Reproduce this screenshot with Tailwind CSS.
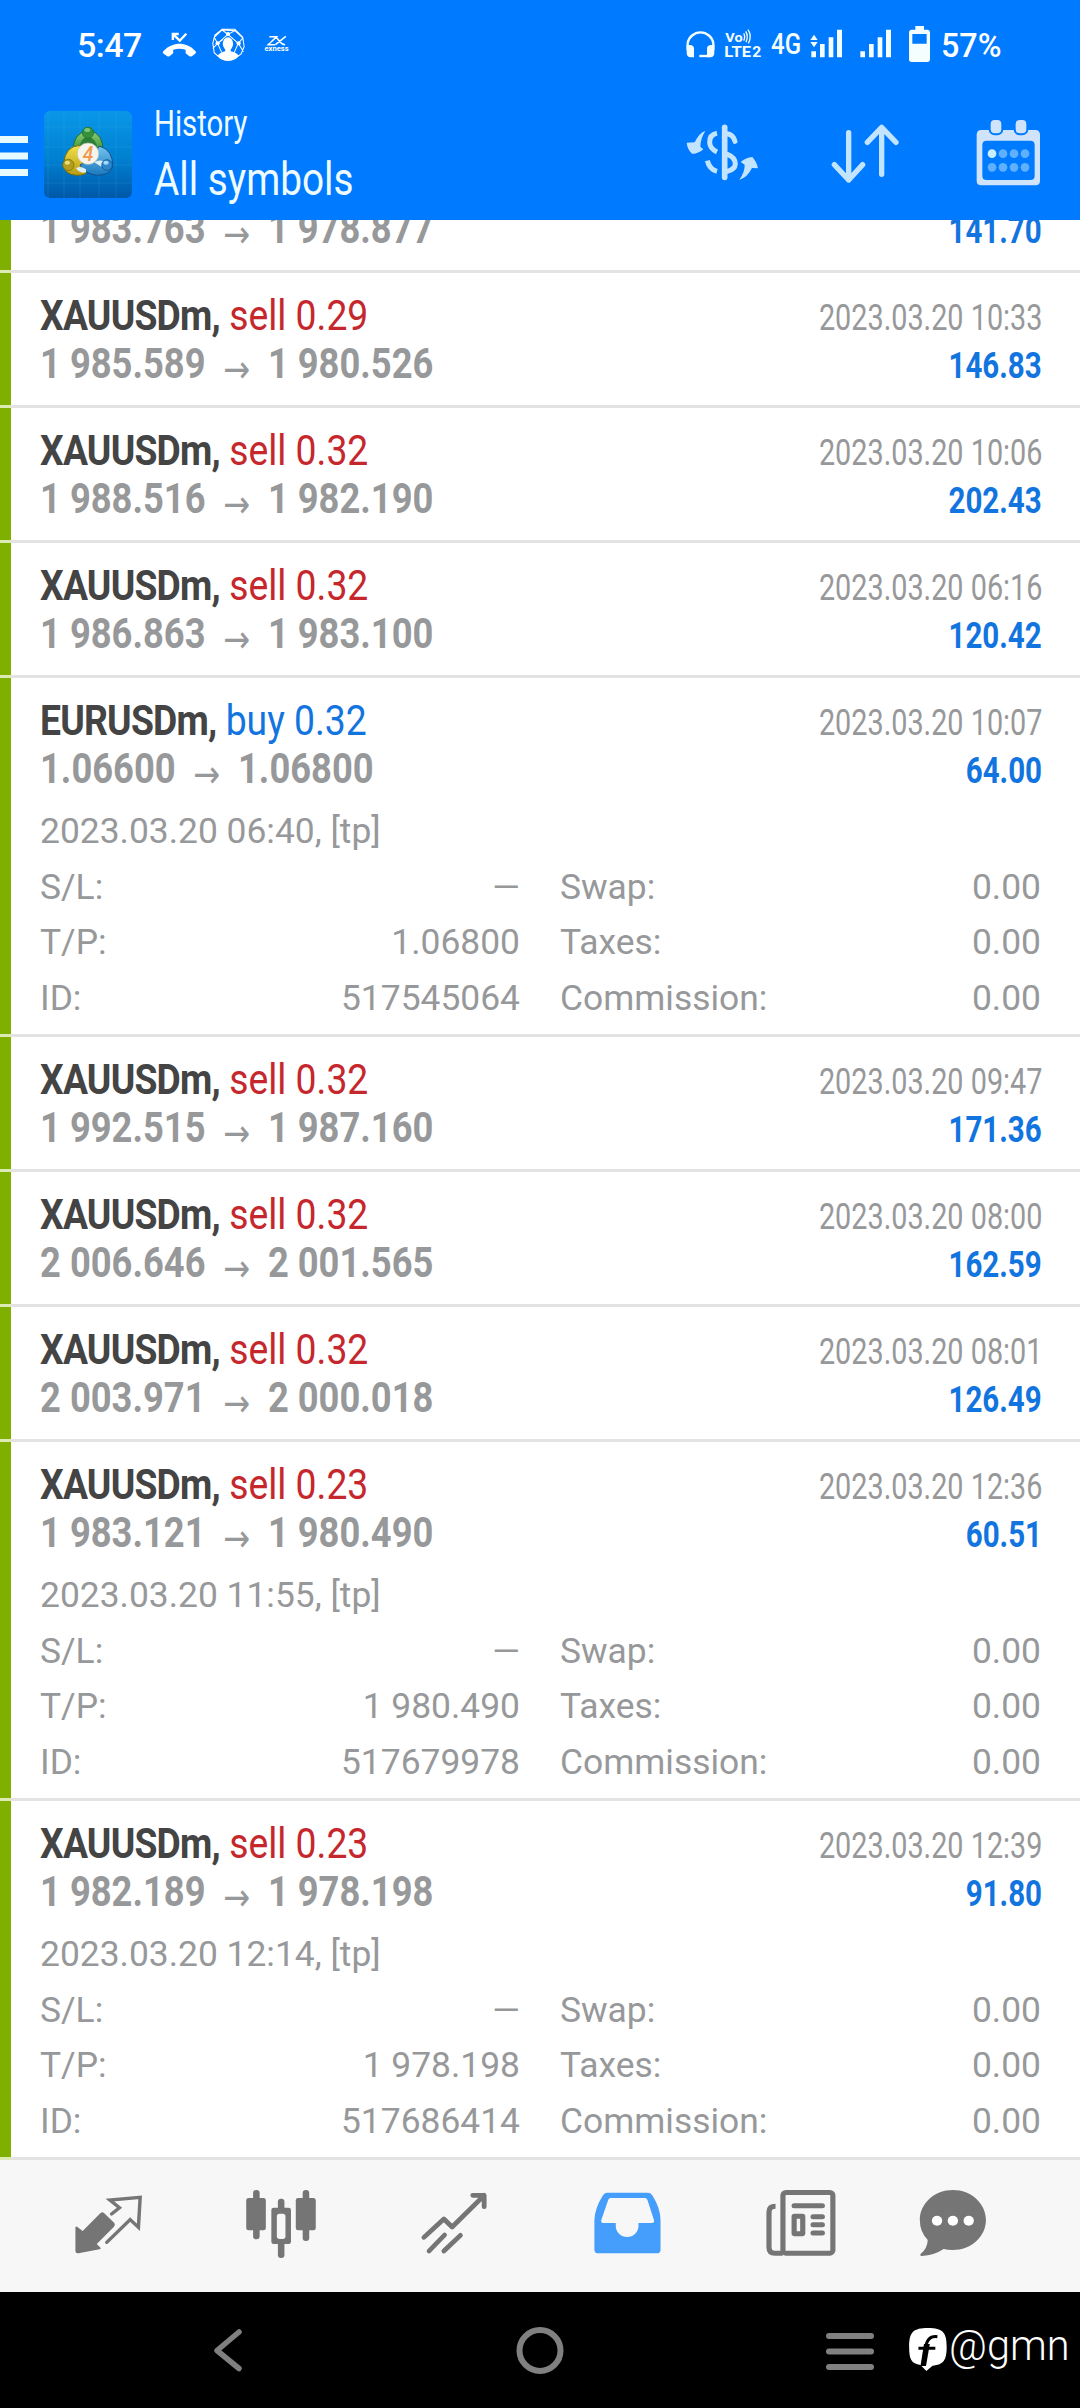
<!DOCTYPE html>
<html lang="en">
<head>
<meta charset="utf-8">
<title>History</title>
<script src="https://cdn.jsdelivr.net/npm/@tailwindcss/browser@4"></script>
</head>
<body class="w-[1080px] h-[2408px] overflow-hidden bg-white font-['Roboto',sans-serif] flex flex-col">
<header class="h-[220px] shrink-0 bg-[#007aff] text-[#effcff] flex flex-col relative z-10">
  <div class="h-[80px] flex items-start whitespace-nowrap">
    <div class="w-[77px]"></div>
    <div class="w-[77px] text-[34px] leading-[80px] h-[80px] pt-[5px] font-medium tracking-[-0.5px] text-white">5:47</div>
    <svg class="w-[146px] h-[80px] shrink-0" viewBox="154 0 146 80">
      <g transform="scale(.34435 .33333)" fill="#fff">
        <path d="M473 155C490 134 512 131 521 131C531 131 553 134 569 155Q570 159 566 162L557 169Q553 171 549 168L539 160V149Q521 144 503 149V160L493 168Q489 171 485 168L475 161Q472 158 473 155Z"/>
        <path d="M502 120V102H519M503 103L522 122L541 101" fill="none" stroke="#fff" stroke-width="7"/>
        <g fill="none" stroke="#fff" stroke-width="3">
          <path d="M645 88H682L705 112L709 140L700 162L682 176H642L622 158L618 130L624 105ZM645 90L682 92L662 103L645 90L622 112L632 130L618 145M682 92L705 114L692 130L707 155M632 130L662 103L692 130M632 130L648 118M632 130L644 158M692 130L680 158"/>
        </g>
        <circle cx="662" cy="102" r="6"/><circle cx="632" cy="130" r="6"/><circle cx="693" cy="130" r="6"/>
        <ellipse cx="662" cy="131" rx="15" ry="19"/>
        <path d="M654 145H670V154Q688 158 693 168Q680 183 662 183Q645 183 632 168Q638 158 654 154Z"/>
        <path d="M782 110H803L779 134H799M799 110C806 110 812 134 828 134M830 109L800 134" fill="none" stroke="#fff" stroke-width="4.5"/>
        <text x="768" y="154" font-size="19" font-weight="700" textLength="70" lengthAdjust="spacingAndGlyphs" font-family="Roboto">exness</text>
      </g>
    </svg>
    <div class="w-[384px]"></div>
    <svg class="w-[257px] h-[80px] shrink-0" viewBox="684 0 257 80">
      <g transform="translate(640 0) scale(.33333)" fill="#f4feff">
        <path d="M143 150V130A39 39 0 0 1 220 130V150" fill="none" stroke="#f4feff" stroke-width="7"/>
        <path d="M140 135H152Q162 137 162 145V172H152Q140 171 140 158ZM223 135H211Q201 137 201 145V172H211Q223 171 223 158Z"/>
        <path d="M178 168H212" stroke="#f4feff" stroke-width="7"/>
        <text x="256" y="127" font-size="41" font-weight="700" textLength="52" lengthAdjust="spacingAndGlyphs" font-family="Roboto">Vo</text>
        <path d="M311 100Q317 110 311 122M317 94Q326 108 318 127M324 89Q337 108 325 130" fill="none" stroke="#f4feff" stroke-width="4"/>
        <text x="253" y="172" font-size="46" font-weight="700" textLength="80" lengthAdjust="spacingAndGlyphs" font-family="Roboto">LTE</text>
        <text x="337" y="172" font-size="44" font-weight="700" textLength="27" lengthAdjust="spacingAndGlyphs" font-family="Roboto">2</text>
        <text x="393" y="162" font-size="87" textLength="90" lengthAdjust="spacingAndGlyphs" font-family="Roboto" font-weight="500">4G</text>
        <path d="M511 120L522 104L533 120ZM511 126L522 142L533 126ZM514 154h14v18h-14zM540 132h14v40h-14zM566 112h14v60h-14zM591 89h15v83h-15z"/>
        <path d="M661 154h14v18h-14zM687 132h14v40h-14zM713 112h14v60h-14zM738 89h15v83h-15z"/>
        <path fill-rule="evenodd" d="M826 78H852V89H863Q870 90 870 97V178Q870 186 862 186H815Q807 186 807 178V97Q807 90 814 89H826ZM817 102V131H860V102Z"/>
      </g>
    </svg>
    <div class="text-[34px] leading-[80px] pt-[5px] font-medium text-white origin-left scale-x-[0.95] w-[66px]">57%</div>
  </div>
  <div class="h-[140px] flex whitespace-nowrap">
    <svg class="w-[154px] h-[140px] shrink-0" viewBox="0 80 154 140">
      <defs>
        <linearGradient id="bg" x1="0" y1="0" x2="0" y2="1"><stop offset="0" stop-color="#0a97e9"/><stop offset=".55" stop-color="#0080d0"/><stop offset="1" stop-color="#0058a8"/></linearGradient>
        <linearGradient id="gr" x1="0" y1="0" x2="0" y2="1"><stop offset="0" stop-color="#8fd07a"/><stop offset="1" stop-color="#2f8a2c"/></linearGradient>
        <linearGradient id="ye" x1="0" y1="0" x2="0" y2="1"><stop offset="0" stop-color="#f1e24a"/><stop offset="1" stop-color="#b89a10"/></linearGradient>
        <linearGradient id="bl" x1="0" y1="0" x2="0" y2="1"><stop offset="0" stop-color="#74c4ee"/><stop offset="1" stop-color="#1b78bf"/></linearGradient>
      </defs>
      <path fill="#e6faff" d="M0 136h28v7H0zM0 152.500h28v7H0zM0 169h28v7H0z"/>
      <rect x="44" y="111" width="88" height="87" rx="6" fill="url(#bg)"/>
      <path d="M48 111V198M64 111V198M80 111V198M99 111V198M116 111V198M44 127H132M44 147H132M44 165H132M44 183H132" stroke="#4db8f5" stroke-opacity=".16"/>
      <g transform="translate(30 100) scale(.33333)">
        <path d="M130 160Q125 98 175 92Q224 98 218 160Z" fill="url(#gr)" stroke="#1f6b2f" stroke-width="3"/>
        <path d="M148 150Q150 112 175 112Q200 114 203 152Z" fill="#2d7f35"/>
        <path d="M150 136Q106 138 101 190Q100 224 140 226Q168 226 174 212L160 180Z" fill="url(#ye)" stroke="#6d6a14" stroke-width="3"/>
        <path d="M208 138Q250 150 248 200Q240 226 200 226Q165 222 150 195L180 180Z" fill="url(#bl)" stroke="#0e4f8c" stroke-width="3"/>
        <path d="M138 205Q150 196 168 208V217Q150 222 138 205ZM193 187Q210 177 222 186L214 200Z" fill="#d9eef5"/>
        <circle cx="174" cy="98" r="17" fill="#35903a" stroke="#206c2a" stroke-width="2"/><ellipse cx="172" cy="90" rx="9" ry="6" fill="#7cc478"/>
        <circle cx="115" cy="195" r="17" fill="#b39c1e" stroke="#6d6a14" stroke-width="2"/><ellipse cx="112" cy="188" rx="8" ry="6" fill="#e9df7c"/>
        <circle cx="231" cy="195" r="16" fill="#2b86cc" stroke="#0e4f8c" stroke-width="2"/><ellipse cx="228" cy="188" rx="8" ry="6" fill="#a7daf5"/>
        <circle cx="174" cy="161" r="32" fill="#f7f4ee" stroke="#b9c4b0" stroke-width="2"/>
        <text x="158" y="182" font-size="58" font-weight="500" font-style="italic" fill="#ef9a4e" font-family="Roboto">4</text>
      </g>
    </svg>
    <div class="w-[532px] pt-[19px]">
      <div class="text-[36px] leading-[50px] origin-left scale-x-[0.815]">History</div>
      <div class="text-[47px] leading-[60px] origin-left scale-x-[0.825]">All symbols</div>
    </div>
    <svg class="w-[394px] h-[140px] shrink-0" viewBox="686 80 394 140">
      <g transform="translate(640 0) scale(.33333)" fill="none" stroke="#c3e4ff" stroke-linecap="round" stroke-linejoin="round">
        <path d="M254 382V532" stroke-width="17"/>
        <path d="M231 400Q208 404 209 428Q210 446 231 456M202 482Q208 508 231 514" stroke-width="15" stroke-linecap="butt"/>
        <path d="M262 401Q280 404 285 424M262 463Q286 472 286 492Q285 508 262 514" stroke-width="15"/>
        <path d="M196 393Q178 398 164 427L140 428Q142 448 156 461Q172 463 190 448L181 440Q182 415 196 393ZM298 539Q322 533 336 504L354 505Q350 485 337 471Q318 472 302 486L314 494Q315 515 298 539Z" fill="#c3e4ff" stroke="none"/>
        <path d="M626 398V540M583 494L626 540L668 494M725 523V382M682 427L725 382L768 427" stroke-width="16"/>
        <path fill="#cfe3fb" stroke="none" fill-rule="evenodd" d="M1024 390H1186Q1200 390 1200 404V542Q1200 556 1186 556H1024Q1010 556 1010 542V404Q1010 390 1024 390ZM1040 422Q1027 422 1027 435V527Q1027 540 1040 540H1171Q1184 540 1184 527V435Q1184 422 1171 422Z"/>
        <rect x="1049" y="357" width="38" height="46" rx="15" fill="#cfe3fb" stroke="#007aff" stroke-width="6"/>
        <rect x="1124" y="357" width="38" height="46" rx="15" fill="#cfe3fb" stroke="#007aff" stroke-width="6"/>
        <g stroke="none" fill="#5fb0ff"><circle cx="1056" cy="461" r="13" fill="#c9efff"/><circle cx="1089" cy="461" r="13"/><circle cx="1122" cy="461" r="13"/><circle cx="1155" cy="461" r="13"/><circle cx="1056" cy="502" r="13"/><circle cx="1089" cy="502" r="13"/><circle cx="1122" cy="502" r="13"/><circle cx="1155" cy="502" r="13"/></g>
      </g>
    </svg>
  </div>
</header>
<main id="list" class="h-[1940px] shrink-0 overflow-hidden flex flex-col justify-end"></main>
<nav class="h-[132px] shrink-0 bg-[#f7f7f7] flex">
  <svg class="w-[194px] h-[132px]" viewBox="0 2160 194 132"><g transform="translate(0 2140) scale(.34435 .33333)">
    <path d="M219 262Q220 258 224 260L240 273L292 219Q297 214 302 219L332 249Q336 254 331 260L281 312L292 323Q294 327 289 328L228 340Q219 340 219 332Z" fill="#757575"/>
    <path d="M324 222L347 203L319 180L407 172L402 262L378 239L310 307" fill="none" stroke="#757575" stroke-width="10" stroke-linecap="round"/></g></svg>
  <svg class="w-[173px] h-[132px]" viewBox="194 2160 173 132"><g transform="translate(0 2140) scale(.34435 .33333)" fill="#757575">
    <rect x="735" y="150" width="19" height="148" rx="9"/><rect x="715" y="174" width="57" height="97" rx="7"/>
    <rect x="879" y="150" width="19" height="153" rx="9"/><rect x="859" y="174" width="58" height="97" rx="7"/>
    <rect x="807" y="176" width="19" height="178" rx="9"/><rect x="788" y="203" width="57" height="109" rx="7"/><rect x="804" y="221" width="25" height="76" rx="8" fill="#f7f7f7"/></g></svg>
  <svg class="w-[173px] h-[132px]" viewBox="367 2160 173 132"><g transform="translate(0 2140) scale(.34435 .33333)" fill="none" stroke="#757575" stroke-width="14" stroke-linecap="round" stroke-linejoin="round">
    <path d="M1231 292L1289 237L1313 261L1406 166M1373 166H1406V200M1246 333L1291 285M1289 333L1337 286"/></g></svg>
  <svg class="w-[174px] h-[132px]" viewBox="540 2160 174 132"><g transform="translate(540 2140) scale(.34435 .33333)">
    <path fill="#459dfc" fill-rule="evenodd" d="M194 158H314Q322 158 327 167Q350 205 350 240V329Q350 340 339 340H170Q158 340 158 329V240Q159 205 182 167Q187 158 194 158ZM205 174Q200 174 198 180L178 240Q176 249 184 249H220V258A33 33 0 0 0 286 258V249H325Q333 249 331 240L312 180Q310 174 305 174Z"/></g></svg>
  <svg class="w-[166px] h-[132px]" viewBox="714 2160 166 132"><g transform="translate(540 2140) scale(.34435 .33333)" fill="none" stroke="#757575">
    <path d="M684 199Q665 199 665 216V322Q665 340 682 340H705" stroke-width="15"/><rect x="705.500" y="157.500" width="145" height="182" rx="9" stroke-width="15"/>
    <path d="M738 197H820M793 230H820M793 254H820M793 279H820" stroke-width="15" stroke-linecap="round"/><rect x="738" y="229" width="25" height="52" rx="1" stroke-width="15"/></g></svg>
  <svg class="w-[200px] h-[132px]" viewBox="880 2160 200 132"><g transform="translate(540 2140) scale(.34435 .33333)" fill="#757575">
    <path d="M1199 150C1252 150 1295 190 1295 240S1252 330 1199 330Q1184 330 1172 327Q1145 346 1109 348Q1101 346 1106 341Q1125 325 1126 300Q1103 275 1103 240C1103 190 1146 150 1199 150Z"/><g fill="#fff"><circle cx="1153" cy="242" r="15"/><circle cx="1199" cy="242" r="15"/><circle cx="1245" cy="242" r="15"/></g></g></svg>
</nav>
<footer class="h-[116px] shrink-0 bg-black flex">
  <svg class="w-[949px] h-[116px] shrink-0" viewBox="0 2292 949 116" fill="none" stroke="#808080" stroke-width="6" stroke-linecap="round" stroke-linejoin="round">
    <path d="M239 2332L217 2350.500L239 2368.500" stroke-width="5.500"/><circle cx="540" cy="2350.500" r="20.500"/>
    <path d="M829 2336H871M829 2351.500H871M829 2367H871"/>
    <g transform="translate(540 2140) scale(.34435 .33333)" stroke="none"><path fill="#fff" d="M1127 564C1170 564 1181 578 1181 620C1181 662 1172 673 1140 677L1122 693L1105 675C1078 670 1072 658 1072 620C1072 576 1084 564 1127 564Z"/><path d="M1119 630Q1122 585 1154 590M1099 625H1148" stroke="#000" stroke-width="9" fill="none" stroke-linecap="butt"/><path d="M1115 612L1105 678H1121L1132 612Z" fill="#000"/></g>
  </svg>
  <div class="text-white text-[43px] leading-[60px] pt-[23px] font-light whitespace-nowrap origin-left scale-x-[0.965]">@gmn</div>
</footer>
<script>
// The first entry is scrolled under the header, so only its price line is rendered.
const trades = [
  ["", "", "1 983.763", "1 978.877", "", "141.70"],
  ["XAUUSDm", "sell 0.29", "1 985.589", "1 980.526", "2023.03.20 10:33", "146.83"],
  ["XAUUSDm", "sell 0.32", "1 988.516", "1 982.190", "2023.03.20 10:06", "202.43"],
  ["XAUUSDm", "sell 0.32", "1 986.863", "1 983.100", "2023.03.20 06:16", "120.42"],
  ["EURUSDm", "buy 0.32", "1.06600", "1.06800", "2023.03.20 10:07", "64.00", "2023.03.20 06:40, [tp]", "517545064"],
  ["XAUUSDm", "sell 0.32", "1 992.515", "1 987.160", "2023.03.20 09:47", "171.36"],
  ["XAUUSDm", "sell 0.32", "2 006.646", "2 001.565", "2023.03.20 08:00", "162.59"],
  ["XAUUSDm", "sell 0.32", "2 003.971", "2 000.018", "2023.03.20 08:01", "126.49"],
  ["XAUUSDm", "sell 0.23", "1 983.121", "1 980.490", "2023.03.20 12:36", "60.51", "2023.03.20 11:55, [tp]", "517679978"],
  ["XAUUSDm", "sell 0.23", "1 982.189", "1 978.198", "2023.03.20 12:39", "91.80", "2023.03.20 12:14, [tp]", "517686414"],
];
const cell = (k, v) => `<div class="flex justify-between"><span>${k}</span><span>${v}</span></div>`;
document.getElementById("list").innerHTML = trades.map(([sym, side, open, close, date, pl, opened, id]) => `
  <section class="shrink-0 flex whitespace-nowrap">
    <div class="w-[11px] bg-[#7fb000] border-b-3 border-[#dcebb4]"></div>
    <div class="flex-1 pl-[29px] pr-[38px] pt-[18px] border-b-3 border-[#e3e3e3] text-[#97989a] ${opened ? "h-[359px]" : "h-[135px]"}">
      <div class="flex justify-between h-[48px] leading-[48px] items-baseline">
        ${sym && `<div class="text-[43px] origin-left scale-x-[0.867]"><b class="text-[#444444] font-bold tracking-[-0.9px]">${sym},</b> <span class="${side[0] === "b" ? "text-[#1274de]" : "text-[#c5272d]"}">${side}</span></div>
        <div class="text-[36px] origin-right scale-x-[0.8]">${date}</div>`}
      </div>
      <div class="flex justify-between h-[48px] leading-[48px] items-baseline">
        <div class="text-[43px] font-bold origin-left scale-x-[0.845]">${open}<span class="font-['DejaVu_Sans'] font-normal text-[38px] leading-[20px] mx-[21px] align-[-4px]">→</span>${close}</div>
        <div class="text-[36px] font-bold text-[#1274de] origin-right scale-x-[0.82]">${pl}</div>
      </div>
      ${opened ? `<div class="mt-[12px] text-[35.4px] leading-[55.6px]">
        <div>${opened}</div>
        <div class="grid grid-cols-[480px_481px] gap-x-[40px]">
          ${cell("S/L:", "—")}${cell("Swap:", "0.00")}
          ${cell("T/P:", close)}${cell("Taxes:", "0.00")}
          ${cell("ID:", id)}${cell("Commission:", "0.00")}
        </div>
      </div>` : ""}
    </div>
  </section>`).join("");
</script>
</body>
</html>
